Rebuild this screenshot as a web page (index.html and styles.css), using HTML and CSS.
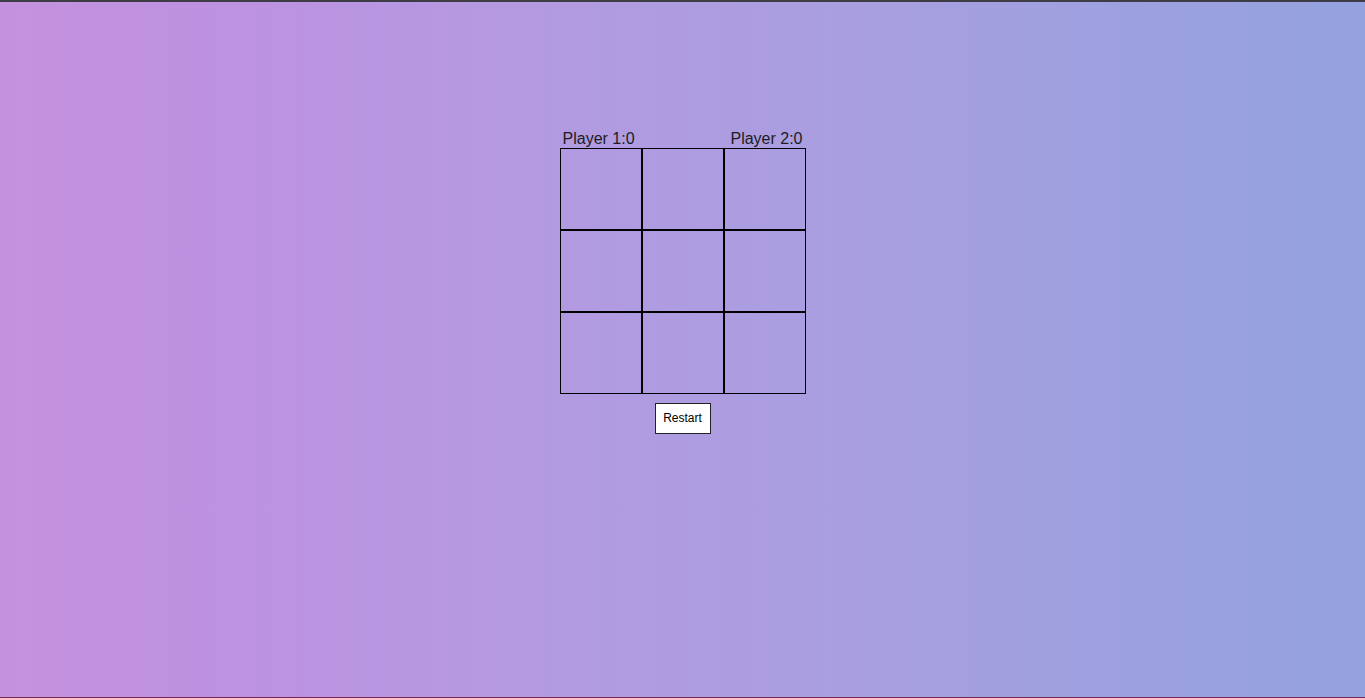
FILE: index.html
```html
<!DOCTYPE html>
<html lang="en">
<head>
<meta charset="utf-8">
<title>Tic Tac Toe</title>
<link rel="stylesheet" href="styles.css">
</head>
<body>
<main class="game">
  <div class="scores">
    <span class="score">Player 1:0</span>
    <span class="score">Player 2:0</span>
  </div>
  <div class="board">
    <div class="cell"></div><div class="cell"></div><div class="cell"></div>
    <div class="cell"></div><div class="cell"></div><div class="cell"></div>
    <div class="cell"></div><div class="cell"></div><div class="cell"></div>
  </div>
  <button class="restart" type="button">Restart</button>
</main>
</body>
</html>
```
FILE: styles.css
```css
html, body {
  margin: 0;
  height: 100%;
}
body {
  box-sizing: border-box;
  border-top: 2px solid #3e3d46;
  border-bottom: 1px solid #7a2a4e;
  background: linear-gradient(90deg, #c491de 0%, #bd92e1 17%, #b39ae0 40%, #a79fe0 65%, #94a2df 100%);
  font-family: "Liberation Sans", Arial, sans-serif;
  overflow: hidden;
}
.game {
  display: flex;
  flex-direction: column;
  align-items: center;
  padding-top: 128px;
}
.scores {
  width: 246px;
  box-sizing: border-box;
  padding: 0 3px;
  display: flex;
  justify-content: space-between;
  font-size: 16px;
  line-height: 18px;
  color: #1c1c24;
}
.board {
  display: grid;
  grid-template-columns: repeat(3, 82px);
  grid-template-rows: repeat(3, 82px);
}
.cell {
  box-sizing: border-box;
  border: 1px solid #000;
}
.restart {
  margin-top: 9px;
  box-sizing: border-box;
  width: 56px;
  height: 31px;
  padding: 0;
  font-family: "Liberation Sans", Arial, sans-serif;
  font-size: 12px;
  line-height: 15px;
  background: #fff;
  border: 1px solid #222;
  color: #000;
  border-radius: 0;
}
```
